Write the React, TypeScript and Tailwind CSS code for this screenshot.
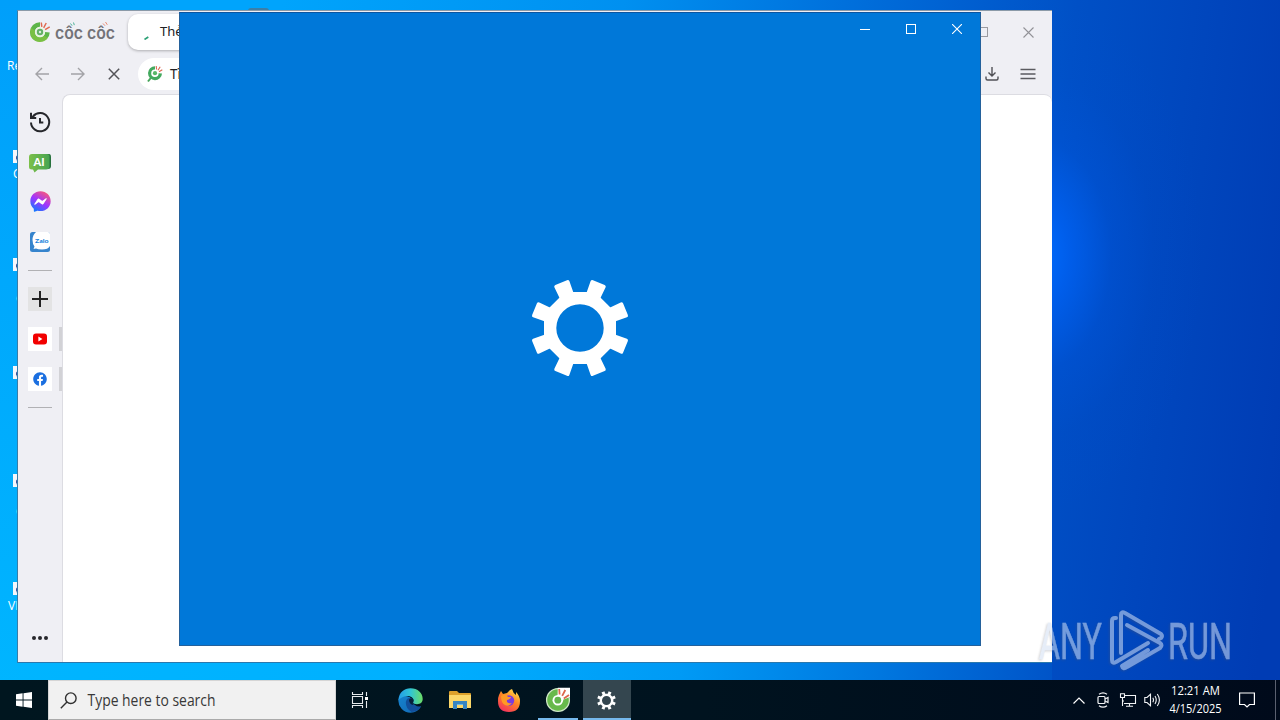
import React from "react";
import { FaFacebook, FaFacebookMessenger } from "react-icons/fa";

function GearShape() {
  const angles = [22.5, 67.5, 112.5, 157.5, 202.5, 247.5, 292.5, 337.5];
  return (
    <g fill="#ffffff">
      {angles.map((a) => (
        <path
          key={a}
          transform={`rotate(${a})`}
          d="M-7.2 -31 L-8.1 -47.4 Q-8.1 -49.2 -6.3 -49.2 H6.3 Q8.1 -49.2 8.1 -47.4 L7.2 -31 Z"
        />
      ))}
      <path
        fillRule="evenodd"
        d="M-14.9 -36 H14.9 L36 -14.9 V14.9 L14.9 36 H-14.9 L-36 14.9 V-14.9Z M23.7 0 A23.7 23.7 0 1 0 -23.7 0 A23.7 23.7 0 1 0 23.7 0Z"
      />
    </g>
  );
}

function CocCocMark({ className }: { className: string }) {
  return (
    <svg viewBox="0 0 24 24" className={className}>
      <path d="M12 1.4 A10.8 10.8 0 1 0 22.6 12.5 L17.6 12 A5.6 5.6 0 1 1 12 6.4 Z" fill="#5db54a" />
      <path d="M2.5 7.4 A10.8 10.8 0 0 0 12 23 A10.8 10.8 0 0 0 20.5 18.6 L16.2 15.7 A5.6 5.6 0 0 1 6.6 10.5 Z" fill="#86c440" opacity=".7" />
      <circle cx="12" cy="12" r="5.6" fill="#e9f4e4" />
      <circle cx="12" cy="12" r="3.5" fill="#62b066" />
      <circle cx="12" cy="12" r="1.3" fill="#d9efd6" />
      <path d="M14 6.4 L13.4 1.6 M16 7.4 L18.8 2.2 M17.6 9.4 L22.6 6.3" stroke="#e06a50" strokeWidth="1.6" />
    </svg>
  );
}

function Wordmark() {
  return (
    <svg viewBox="0 0 62 28" className="ml-[4px] h-[28px] w-[62px]">
      <text x="0" y="21" textLength="60" lengthAdjust="spacingAndGlyphs" fill="#737378" fontFamily="Inter, Liberation Sans, sans-serif" fontSize="17" fontWeight="600">côc côc</text>
      <path d="M15.5 5.5 l1.6 2.2 M18.5 4.5 l.8 2.6" stroke="#4db39a" strokeWidth="1" />
      <path d="M48 5.5 l2 2.2 M50.5 4 l1.8 2.8" stroke="#e98a73" strokeWidth="1" />
    </svg>
  );
}

function Shortcut({ className, label, labelClass }: { className: string; label?: string; labelClass?: string }) {
  return (
    <div className={className}>
      <div className="flex h-[13px] w-[13px] items-center bg-[#f5f7fb] pl-[3px]">
        <svg viewBox="0 0 8 8" className="h-[8px] w-[8px]">
          <path d="M0 8 V4 Q0 2 4 2 V0 L8 4 L4 7 V5 Q1 4 0 8Z" fill="#41519c" />
        </svg>
      </div>
      {label && <div className={labelClass}>{label}</div>}
    </div>
  );
}

function Sidebar() {
  return (
    <aside className="flex w-[44px] shrink-0 flex-col items-center">
      <div className="flex h-[40px] items-center pt-[14px]">
        <svg viewBox="0 0 24 24" className="h-[24px] w-[24px]" fill="none" stroke="#26272b" strokeWidth="2">
          <path d="M3 12.5 A9.1 9.1 0 1 0 5 6.5 L3.8 7.6" />
          <path d="M3 2.8 V8 H8.2" />
          <path d="M12 8 V12.4 H15.3" />
        </svg>
      </div>
      <div className="flex h-[40px] items-center pt-[15px]">
        <svg viewBox="0 0 24 22" className="h-[22px] w-[24px]">
          <defs>
            <linearGradient id="ai" x2="1">
              <stop stopColor="#7cc04a" />
              <stop offset="1" stopColor="#48a451" />
            </linearGradient>
          </defs>
          <path d="M18 2 H21 Q23 2 23 5 V14 Q23 17 20 17 H18Z" fill="#28713d" />
          <path d="M4 2 H19 Q21.5 2 21.5 4 V15 Q21 17.5 18 17.5 H10 L6.5 20.5 L5 17.5 H4 Q1 17.5 1 15 V5 Q1 2 4 2Z" fill="url(#ai)" />
          <text x="5.6" y="13.6" fontFamily="Lato, sans-serif" fontWeight="900" fontSize="11" fill="#fff">AI</text>
        </svg>
      </div>
      <div className="flex h-[40px] items-center pt-[12px]">
        <svg viewBox="0 0 20 20" className="h-[21px] w-[21px]">
          <defs>
            <linearGradient id="msg" x1=".2" y1="1" x2=".8" y2="0">
              <stop stopColor="#0a7cff" />
              <stop offset=".5" stopColor="#a034ff" />
              <stop offset="1" stopColor="#ff5a72" />
            </linearGradient>
          </defs>
          <FaFacebookMessenger x="0" y="0" size="20" fill="url(#msg)" color="url(#msg)" />
          <path d="M4.5 12.5 L8 7.5 L11.5 10 L15.5 7.4 L12 12.5 L8.3 10 Z" fill="#fff" stroke="#fff" strokeWidth=".4" />
        </svg>
      </div>
      <div className="flex h-[40px] items-center pt-[14px]">
        <svg viewBox="0 0 20 20" className="h-[20px] w-[20px]">
          <rect width="20" height="20" rx="2.5" fill="#3684cd" />
          <path d="M6 0 H18 Q20 0 20 2 V14 Q18 17.5 12 17.5 Q8 17.5 6 16.5 L3.5 17 L4.5 14.5 Q2.5 12 2.5 8 Q2.5 3 6 0Z" fill="#fff" />
          <text x="5" y="10.7" textLength="13.5" lengthAdjust="spacingAndGlyphs" fontFamily="Lato, sans-serif" fontWeight="900" fontSize="6.3" fill="#1b83dc">Zalo</text>
        </svg>
      </div>
      <div className="mt-[15px] h-px w-[24px] bg-[#b1b1b4]" />
      <div className="mt-[16px] flex h-[24px] w-[24px] items-center justify-center bg-[#e3e3e4]">
        <svg viewBox="0 0 16 16" className="h-[16px] w-[16px]"><path d="M8 0V16M0 8H16" stroke="#222" strokeWidth="2" /></svg>
      </div>
      <div className="mt-[16px] flex h-[24px] w-full items-center">
        <div className="ml-[10px] flex h-[24px] w-[24px] items-center justify-center bg-white">
          <svg viewBox="0 0 14 12" className="h-[12px] w-[14px]">
            <rect y=".5" width="14" height="11" rx="3" fill="#f20000" />
            <path d="M5.4 3.6 V8.4 L9.4 6Z" fill="#fff" />
          </svg>
        </div>
        <div className="ml-auto h-[24px] w-[3px] bg-[#d2d2d6]" />
      </div>
      <div className="mt-[16px] flex h-[24px] w-full items-center">
        <div className="ml-[10px] flex h-[24px] w-[24px] items-center justify-center bg-white">
          <FaFacebook size={14} color="#1b6fe0" />
        </div>
        <div className="ml-auto h-[24px] w-[3px] bg-[#d2d2d6]" />
      </div>
      <div className="mt-[16px] h-px w-[24px] bg-[#b1b1b4]" />
      <div className="mb-[22px] mt-auto flex gap-[2px]">
        <span className="h-[4px] w-[4px] rounded-full bg-[#27272b]" />
        <span className="h-[4px] w-[4px] rounded-full bg-[#27272b]" />
        <span className="h-[4px] w-[4px] rounded-full bg-[#27272b]" />
      </div>
    </aside>
  );
}

function Browser() {
  return (
    <section className="absolute left-[17px] top-[10px] flex h-[653px] w-[1035px] flex-col border-b border-l border-t border-b-[#2a78ad] border-l-[#377ca8] border-t-[#8b9aa8] bg-[#efeff4]">
      <header className="flex h-[42px] shrink-0 items-center pl-[11px]">
        <CocCocMark className="h-[22px] w-[22px]" />
        <Wordmark />
        <div className="ml-[11px] flex h-[36px] w-[240px] items-center rounded-[10px] bg-white shadow-[0_1px_3px_rgba(0,0,0,.28)]">
          <svg viewBox="0 0 5 4" className="ml-[16px] mt-[12px] h-[4px] w-[5px]"><path d="M.5 3.5 L4.3 1" stroke="#2ba176" strokeWidth="1.7" /></svg>
          <span className="ml-[11px] font-['Noto_Sans',sans-serif] text-[13px] text-[#202124]">Thẻ</span>
        </div>
        <svg viewBox="0 0 10 10" className="ml-auto mr-[35px] h-[10px] w-[10px]"><rect x=".5" y=".5" width="9" height="9" fill="none" stroke="#9b9ba0" /></svg>
        <svg viewBox="0 0 11 11" className="mr-[18px] h-[11px] w-[11px]"><path d="M.5 .5 L10.5 10.5 M10.5 .5 L.5 10.5" stroke="#929297" strokeWidth="1.1" /></svg>
      </header>
      <div className="flex h-[42px] shrink-0 items-center">
        <svg viewBox="0 0 14 14" className="ml-[17px] h-[14px] w-[14px]" fill="none" stroke="#a3a3a7" strokeWidth="1.4"><path d="M14 7 H1 M7 1 L1 7 L7 13" /></svg>
        <svg viewBox="0 0 14 14" className="ml-[22px] h-[14px] w-[14px]" fill="none" stroke="#a3a3a7" strokeWidth="1.4"><path d="M0 7 H13 M7 1 L13 7 L7 13" /></svg>
        <svg viewBox="0 0 12 12" className="ml-[23px] h-[12px] w-[12px]"><path d="M.8 .8 L11.2 11.2 M11.2 .8 L.8 11.2" stroke="#535358" strokeWidth="1.5" /></svg>
        <div className="ml-[18px] flex h-[32px] w-[780px] items-center rounded-full bg-white pl-[8px]">
          <svg viewBox="0 0 18 18" className="h-[18px] w-[18px]">
            <path d="M5.5 12 L2 16.5" stroke="#45a45a" strokeWidth="2" />
            <path d="M9 1.2 A7 7 0 1 0 16 8.5 L12.6 8.2 A3.7 3.7 0 1 1 9 4.6Z" fill="#43a95e" />
            <circle cx="9" cy="8.2" r="2.1" fill="#58b768" />
            <path d="M10.6 4.5 L10.2 1 M12 5.3 L14.2 1.8 M13 6.8 L16.3 4.8" stroke="#dc6650" strokeWidth="1.1" />
          </svg>
          <span className="ml-[6px] font-['Noto_Sans',sans-serif] text-[13.5px] text-[#202124]">Tì</span>
        </div>
        <svg viewBox="0 0 14 14" className="ml-auto mr-[21px] h-[14px] w-[14px]" fill="none" stroke="#505055" strokeWidth="1.4"><path d="M7 0 V8.5 M3.5 5.5 L7 9 L10.5 5.5 M1 9.5 V11.5 Q1 13 2.5 13 H11.5 Q13 13 13 11.5 V9.5" /></svg>
        <svg viewBox="0 0 16 12" className="mr-[16px] h-[12px] w-[16px]" stroke="#5b5b60" strokeWidth="1.4"><path d="M.5 1.5H15.5M.5 6H15.5M.5 10.5H15.5" /></svg>
      </div>
      <div className="flex min-h-0 flex-1">
        <Sidebar />
        <main className="mt-[-1px] flex-1 rounded-t-[8px] border-l border-t border-[#dcdce2] bg-white" />
      </div>
    </section>
  );
}

function SettingsWindow() {
  return (
    <section className="absolute left-[179px] top-[12px] flex h-[634px] w-[802px] flex-col border border-[#24619b] border-t-[#0b55a0] bg-[#0078d9]">
      <div className="flex h-[32px] justify-end">
        <div className="flex w-[46px] items-center justify-center"><svg viewBox="0 0 10 10" className="h-[10px] w-[10px]"><path d="M0 5.5H10" stroke="#fff" /></svg></div>
        <div className="flex w-[46px] items-center justify-center"><svg viewBox="0 0 10 10" className="h-[10px] w-[10px]"><rect x=".5" y=".5" width="9" height="9" fill="none" stroke="#fff" /></svg></div>
        <div className="flex w-[46px] items-center justify-center"><svg viewBox="0 0 10 10" className="h-[10px] w-[10px]"><path d="M0 0L10 10M10 0L0 10" stroke="#fff" strokeWidth="1.1" /></svg></div>
      </div>
      <div className="flex flex-1 items-center justify-center pb-[34px]">
        <svg viewBox="-50 -50 100 100" className="h-[100px] w-[100px]"><GearShape /></svg>
      </div>
    </section>
  );
}

function Watermark() {
  return (
    <svg viewBox="0 0 210 70" className="absolute left-[1034px] top-[606px] h-[70px] w-[210px] opacity-55 drop-shadow-[-1px_1px_1px_rgba(90,90,100,0.5)]">
      <g fontFamily="Roboto, sans-serif" fontSize="50" fill="#d3e0f4" stroke="#d3e0f4" strokeWidth=".5">
        <text x="5" y="53" textLength="63" lengthAdjust="spacingAndGlyphs">ANY</text>
        <text x="134" y="53" textLength="64" lengthAdjust="spacingAndGlyphs">RUN</text>
      </g>
      <g fill="none" stroke="#d3e0f4" strokeWidth="4" strokeLinejoin="round" strokeLinecap="round">
        <path d="M82 12 H81 Q78 12 78 15 V54 Q78 58 82 56 L114 37" />
        <path d="M87 47 V9 Q87 5 91 7 L127 28 Q129 30 127 32 L125 33" />
        <path d="M93 19 L126 37 Q129 39 126 42 L93 61 Q89 64 88 60 L114 44" />
      </g>
    </svg>
  );
}

function Taskbar() {
  return (
    <footer className="absolute bottom-0 left-0 flex h-[40px] w-full bg-[linear-gradient(90deg,#00161f,#00131f_55%,#000a1b)] font-['Open_Sans',sans-serif]">
      <div className="flex w-[48px] items-center justify-center">
        <svg viewBox="0 0 16 16" className="h-[16px] w-[16px]" fill="#fff"><path d="M0 2.3 L6.6 1.3 V7.5 H0ZM7.5 1.2 L16 0 V7.5 H7.5ZM0 8.5H6.6V14.7L0 13.7ZM7.5 8.5H16V16L7.5 14.8Z" /></svg>
      </div>
      <div className="flex w-[288px] items-center border border-[#d5d5d5] border-b-[#aaaaaa] bg-[#f1f1f1] pl-[11px]">
        <svg viewBox="0 0 17 17" className="h-[17px] w-[17px]" fill="none" stroke="#303030" strokeWidth="1.4"><circle cx="10.8" cy="6.2" r="5.3" /><path d="M7 10 L.8 16.2" /></svg>
        <svg viewBox="0 0 140 30" className="ml-[10px] h-[30px] w-[140px]"><text x=".5" y="20.5" fontSize="15.5" textLength="128" lengthAdjust="spacingAndGlyphs" fill="#383838">Type here to search</text></svg>
      </div>
      <div className="flex w-[50px] items-center justify-center">
        <svg viewBox="0 0 18 16" className="mr-[2px] h-[16px] w-[18px]" fill="none" stroke="#e5eaed" strokeWidth="1.1"><path d="M1.5 0V2.5H11.5V0M1.5 16V13.5H11.5V16M1.5 4.5H11.5V11.5H1.5ZM15.5 0V4M15.5 9V16" /><rect x="14" y="5" width="3" height="3" fill="#fff" stroke="none" /></svg>
      </div>
      <div className="flex w-[49px] items-center justify-center">
        <svg viewBox="0 0 24 24" className="h-[25px] w-[25px]">
          <defs>
            <linearGradient id="edgeTop" x2="1"><stop stopColor="#239ce8" /><stop offset=".5" stopColor="#31c5d4" /><stop offset="1" stopColor="#6cdd66" /></linearGradient>
            <linearGradient id="edgeLow" x2="1" y2="1"><stop stopColor="#1683ce" /><stop offset="1" stopColor="#1268b4" /></linearGradient>
          </defs>
          <path d="M.4 11 A11.7 11.7 0 0 0 12 23.7 Q19 23.5 22.2 17.5 Q15 21 11 16 Q8 13 12 9 Q3 5 .4 11Z" fill="url(#edgeLow)" />
          <path d="M.4 11.5 C1 4 6 .3 12 .3 C19 .3 23.7 5 23.7 10.5 C23.7 15 19 16.5 15 14.8 C14 14.2 15 13 15 12 C15 8 7 5 .4 11.5Z" fill="url(#edgeTop)" />
          <path d="M7.5 14 Q8 8.5 12.5 9.7 Q15.7 11 14.3 13.8 Q14 15 16 16 Q19 18.5 22.2 17.5 Q19 23 13 23 Q7.5 20 7.5 14Z" fill="#124f9b" />
          <path d="M10.5 11.2 Q12.5 8.8 14.8 11.3 Q14.7 13 14.2 14.3 Q13.8 15.5 15.4 16.4 Q11 16.3 10.5 11.2Z" fill="#06203a" />
        </svg>
      </div>
      <div className="flex w-[49px] items-center justify-center">
        <svg viewBox="0 0 22 20" className="h-[20px] w-[22px]"><path d="M0 2 Q0 1 1 1H8L10 3H21Q22 3 22 4V18H0Z" fill="#dda12b" /><path d="M0 5 H22V18H0Z" fill="#fbd769" /><path d="M4 11H18V19H14V15H8V19H4Z" fill="#3685c2" /><path d="M8 14H14V15H8Z" fill="#6db9e5" /></svg>
      </div>
      <div className="flex w-[49px] items-center justify-center">
        <svg viewBox="0 0 24 25" className="h-[25px] w-[24px]">
          <defs><linearGradient id="fox" x1=".8" x2=".2" y2="1"><stop stopColor="#ffe14d" /><stop offset=".45" stopColor="#ff8423" /><stop offset="1" stopColor="#f32b63" /></linearGradient></defs>
          <path d="M2 7 L4 3 L6 6 L10 5 L13 2 L15 1 Q16 5 19 7 L19 4 Q23 8 23 13 Q23 24 12 24 Q1 24 1 13 Q1 9 2 7Z" fill="url(#fox)" />
          <circle cx="12" cy="12.5" r="5.2" fill="#793be0" />
          <path d="M4 8 Q9 5 11 9 L14 9 Q14 11 10 12 Q9 16 15 15 Q12 19 8 17 Q4 15 4 8Z" fill="#ff9a25" />
        </svg>
      </div>
      <div className="flex w-[49px] flex-col items-center">
        <div className="flex h-[38px] items-center">
          <svg viewBox="0 0 26 26" className="mt-[2px] h-[26px] w-[26px]">
            <circle cx="13" cy="13" r="11.4" fill="#67b94b" stroke="#cfe6c6" strokeWidth="1.3" />
            <path d="M12.5 10 L12.8 .8 H25 V10 L15 14Z" fill="#fff" />
            <circle cx="12.8" cy="13.2" r="5.3" fill="#fff" />
            <circle cx="12.8" cy="13.2" r="3.4" fill="#62b54c" />
            <path d="M14.6 7.5 L14.2 2 M17.2 8.8 L20.3 3 M18.8 11.4 L24 8" stroke="#dd674d" strokeWidth="1.8" />
          </svg>
        </div>
        <div className="h-[2px] w-[40px] bg-[#76b9ed]" />
      </div>
      <div className="flex w-[49px] flex-col items-center border-l border-[#00131f] bg-[#34464f]">
        <div className="flex h-[38px] items-center"><svg viewBox="-50 -50 100 100" className="mr-px mt-[2px] h-[19px] w-[19px]"><GearShape /></svg></div>
        <div className="h-[2px] w-full bg-[#76b9ed]" />
      </div>
      <div className="ml-auto flex items-center">
        <svg viewBox="0 0 12 7" className="mr-[12px] h-[7px] w-[12px]" fill="none" stroke="#fff" strokeWidth="1.2"><path d="M.5 6.5 L6 1 L11.5 6.5" /></svg>
        <svg viewBox="0 0 12 16" className="mr-[10px] h-[16px] w-[12px]" fill="none" stroke="#f1f3f5" strokeWidth="1.2"><rect x="1" y="4.5" width="7" height="7" rx="1" /><path d="M8 7 L11 5.5 V10.5 L8 9 M2 2.3 Q6 -.5 10 2.3 M2 13.7 Q6 16.5 10 13.7" /></svg>
        <svg viewBox="0 0 18 14" className="mr-[7px] h-[14px] w-[18px]" fill="none" stroke="#f1f3f5" strokeWidth="1.1"><path d="M6 2.5 H16.5 V10.5 H5 M10.5 10.5 V13 M7 13.2 H14 M1.5 .8 H5.5 V4.5 H1.5Z M3.5 4.5 V13 M3.5 8 H5" /></svg>
        <svg viewBox="0 0 17 14" className="mr-[7px] h-[14px] w-[17px]" fill="none" stroke="#f1f3f5" strokeWidth="1.1"><path d="M.8 4.5 H3 L6.5 1.3 V12.7 L3 9.5 H.8Z M8.8 4.7 Q10.2 7 8.8 9.3 M11 3 Q13.5 7 11 11 M13.3 1 Q17.5 7 13.3 13" /></svg>
        <svg viewBox="0 0 60 40" className="h-[40px] w-[60px]" fill="#fff" fontFamily="Open Sans, sans-serif" fontSize="12"><text x="3" y="15" textLength="49" lengthAdjust="spacingAndGlyphs">12:21 AM</text><text x="1.5" y="33" textLength="52" lengthAdjust="spacingAndGlyphs">4/15/2025</text></svg>
        <svg viewBox="0 0 16 16" className="ml-[11px] h-[16px] w-[16px]" fill="none" stroke="#fff" strokeWidth="1.2"><path d="M.6 1 H15.4 V12.5 H10.5 L8 15 L5.5 12.5 H.6Z" /></svg>
        <div className="ml-[20px] mr-[4px] h-[40px] w-px bg-[#5a6070]" />
      </div>
    </footer>
  );
}

export default function App() {
  return (
    <div className="relative h-[720px] w-[1280px] overflow-hidden bg-[radial-gradient(ellipse_170px_260px_at_1035px_255px,rgba(0,108,255,1)_0%,rgba(0,100,250,.7)_20%,rgba(0,88,230,.3)_45%,rgba(0,80,215,.1)_70%,transparent_100%),linear-gradient(97deg,#00a4fc_0px,#00a4fc_280px,#0090f0_620px,#006dda_860px,#0050c6_1070px,#003cb4_1330px)]">
      <div className="absolute bottom-[40px] left-0 h-[20px] w-[1052px] bg-[linear-gradient(90deg,#00b5ff_0px,#00b0ff_420px,#009af5_680px,#0077df_880px,#0054c8_1052px)]" />
      <div className="absolute left-0 top-0 h-full w-[20px] bg-gradient-to-b from-[#009ffa] to-[#00b6ff]" />
      <div className="absolute left-[248px] top-[8px] h-[3px] w-[21px] rounded-t-full bg-[#3b7fa8]" />
      <div className="font-['Open_Sans',sans-serif] text-[12px] leading-[14px] text-white">
        <div className="absolute left-[7px] top-[59px]">Re</div>
        <Shortcut className="absolute left-[13px] top-[150px]" label="C" labelClass="mt-[4px]" />
        <Shortcut className="absolute left-[13px] top-[258px]" label="c" labelClass="ml-[3px] mt-[20px]" />
        <Shortcut className="absolute left-[13px] top-[366px]" />
        <Shortcut className="absolute left-[13px] top-[474px]" label="c" labelClass="ml-[3px] mt-[17px]" />
        <Shortcut className="absolute left-[13px] top-[582px]" />
        <div className="absolute left-[8px] top-[599px]">VL</div>
      </div>
      <Browser />
      <SettingsWindow />
      <Watermark />
      <Taskbar />
    </div>
  );
}
